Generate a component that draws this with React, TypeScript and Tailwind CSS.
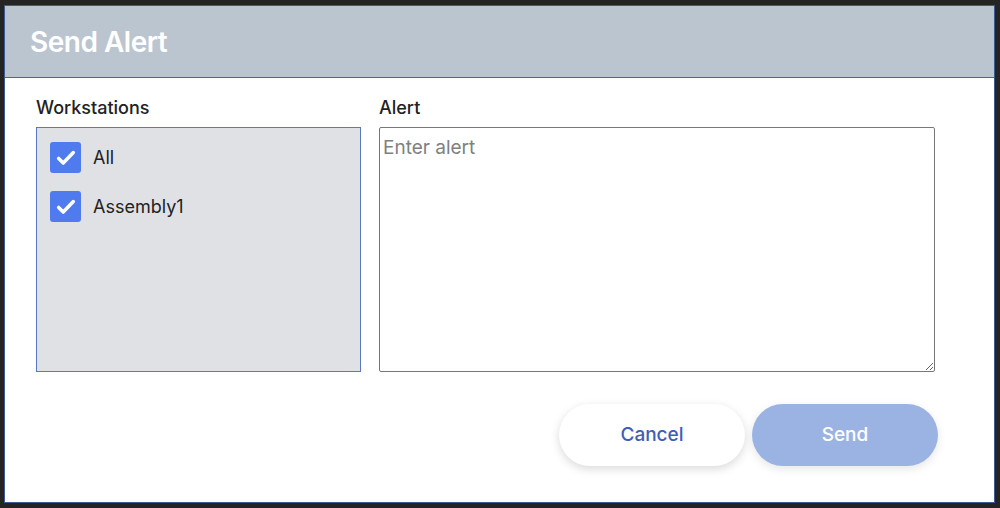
import React from "react";

function Check({ label }: { label: string }) {
  return (
    <label className="flex items-center gap-[12px]">
      <span className="flex h-[31px] w-[31px] items-center justify-center rounded-[3px] bg-[#4f7bef]">
        <svg width="22" height="22" viewBox="0 0 24 24" fill="none">
          <path d="M4 12.5l5 5L20 6" stroke="white" strokeWidth="3.8" strokeLinecap="round" strokeLinejoin="round" />
        </svg>
      </span>
      <span className="text-[18px] text-[#222]">{label}</span>
    </label>
  );
}

export default function App() {
  return (
    <div
      className="h-[508px] w-[1000px] bg-[#242424] pl-[4px] pr-[5px] pt-[5px] pb-[5px]"
      style={{ fontFamily: "Inter, Roboto, 'Noto Sans', sans-serif" }}
    >
      <div className="flex h-full flex-col border border-[#3c5a94] bg-white">
        <div className="flex h-[72px] items-center border-b border-[#4a66a0] bg-[#bbc5cf] pl-[25px]">
          <h1 className="text-[28px] font-semibold tracking-[-0.5px] text-white">Send Alert</h1>
        </div>
        <div className="flex gap-[18px] pl-[31px] pt-[20px]">
          <div className="flex flex-col">
            <div className="mb-[9px] text-[18px] font-medium leading-[20px] text-[#222]">Workstations</div>
            <div className="flex h-[245px] w-[325px] flex-col gap-[18px] border border-[#5a78c4] bg-[#e0e1e5] pl-[13px] pt-[14px]">
              <Check label="All" />
              <Check label="Assembly1" />
            </div>
          </div>
          <div className="flex flex-col">
            <div className="mb-[9px] text-[18px] font-medium leading-[20px] text-[#222]">Alert</div>
            <textarea
              placeholder="Enter alert"
              className="h-[245px] w-[556px] rounded-[2px] border border-[#777] px-[3px] pt-[6px] text-[19px] text-[#222] outline-none placeholder:text-[#808080]"
            />
          </div>
        </div>
        <div className="flex justify-end gap-[7px] pr-[56px] pt-[32px]">
          <button className="h-[62px] w-[186px] rounded-full bg-white text-[19px] font-medium text-[#3f5eb5] shadow-[0_3px_10px_rgba(0,0,0,0.15)]">
            Cancel
          </button>
          <button className="h-[62px] w-[186px] rounded-full bg-[#9bb3e3] text-[19px] font-medium text-white shadow-[0_3px_10px_rgba(0,0,0,0.1)]">
            Send
          </button>
        </div>
      </div>
    </div>
  );
}
